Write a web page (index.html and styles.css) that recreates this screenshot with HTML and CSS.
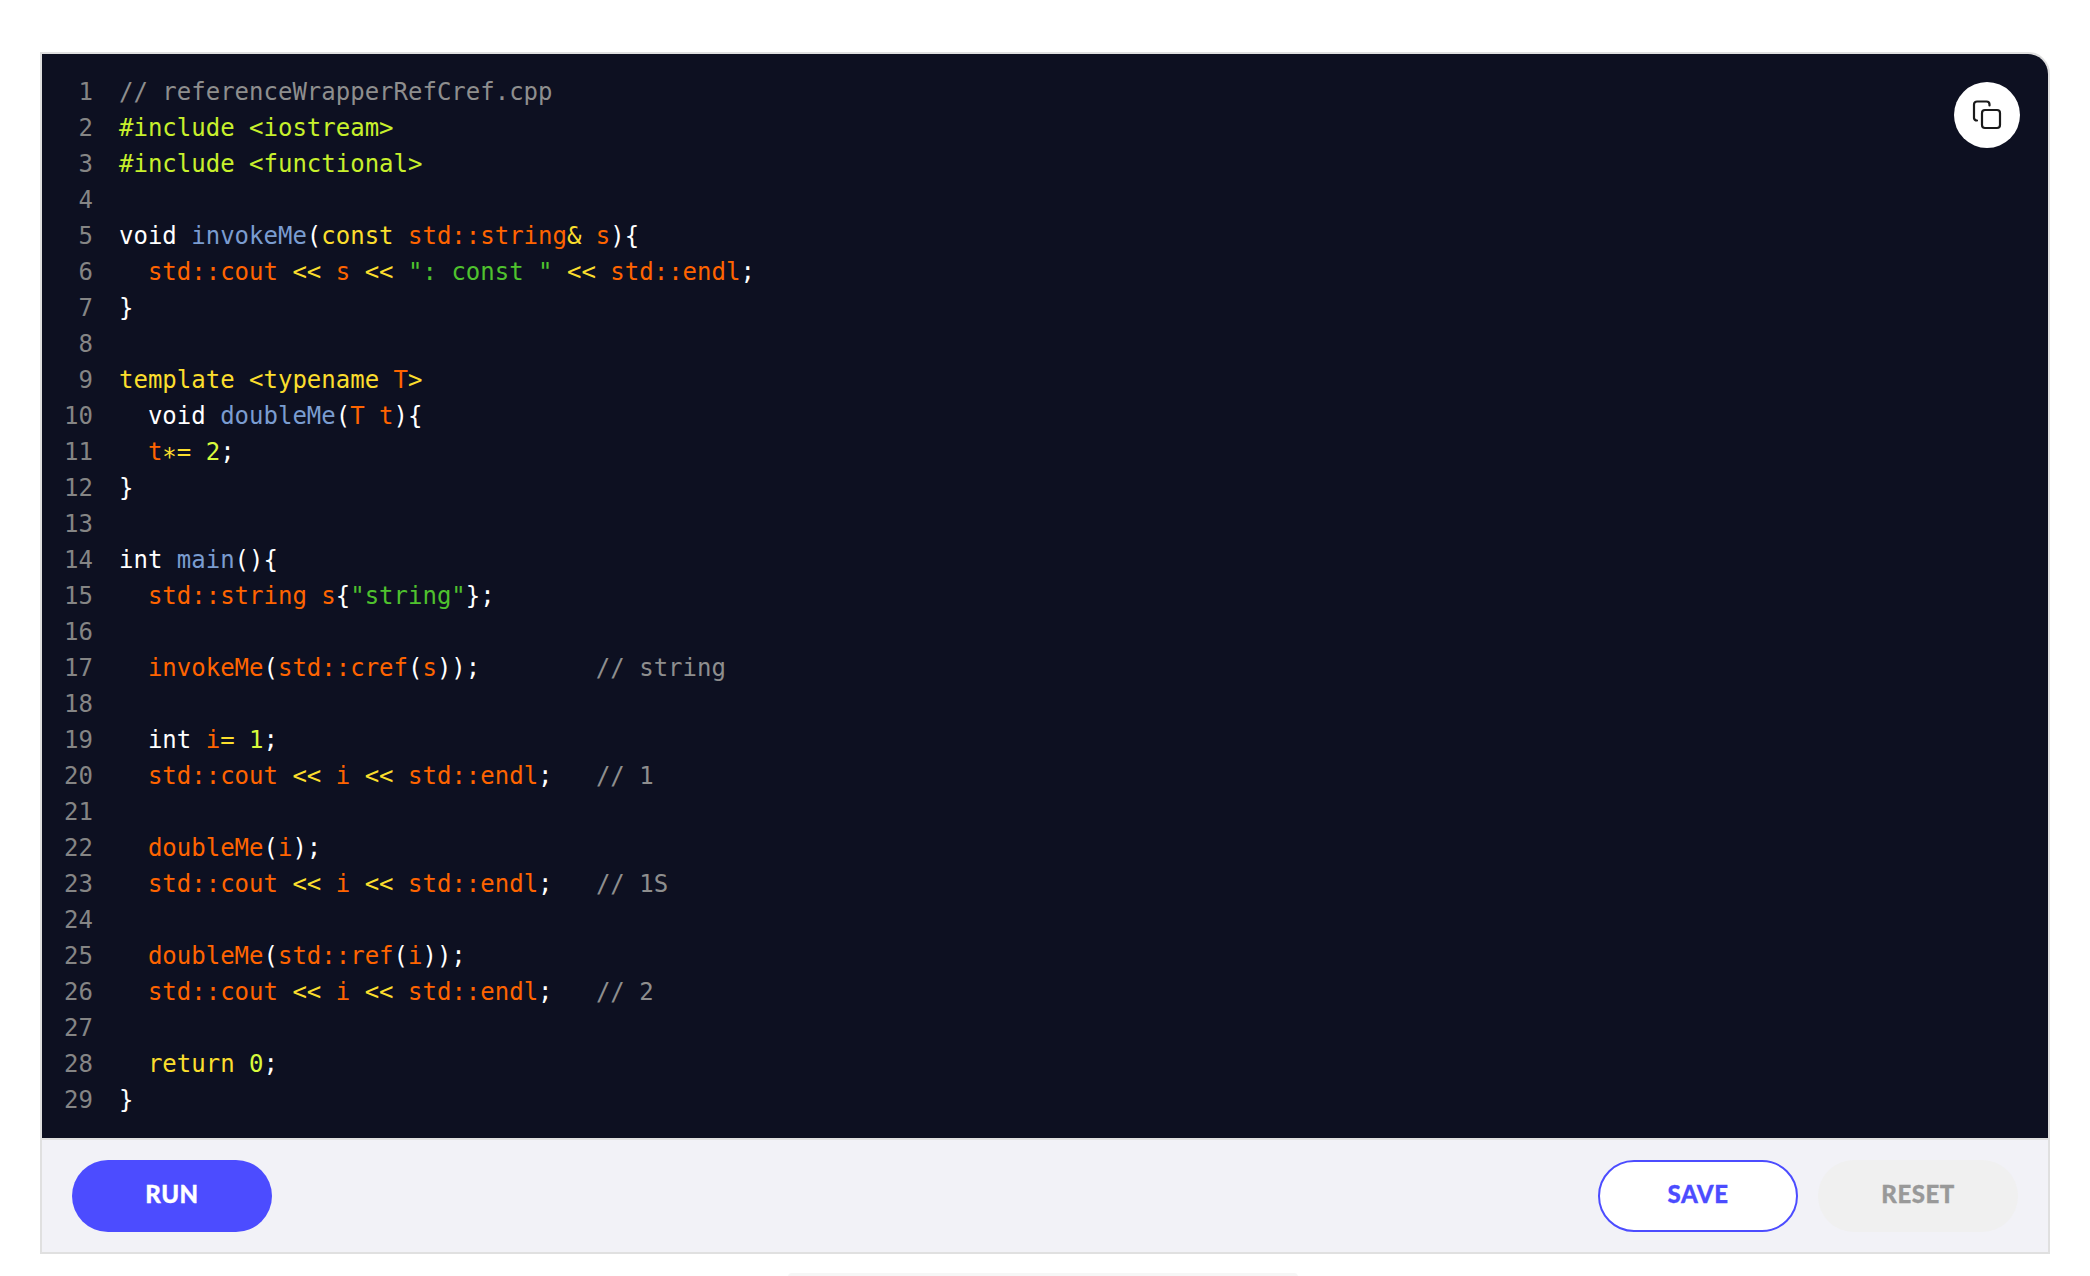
FILE: index.html
```html
<!DOCTYPE html>
<html lang="en">
<head>
<meta charset="utf-8">
<title>referenceWrapperRefCref.cpp</title>
<link rel="stylesheet" href="styles.css">
</head>
<body>
<main class="widget">
  <div class="editor">
    <button class="copy" aria-label="Copy">
      <svg class="copy-icon" viewBox="0 0 30 30" width="30" height="30" fill="none" stroke="currentColor" stroke-width="2.2" stroke-linejoin="round" stroke-linecap="round">
        <rect x="10" y="10" width="18" height="18" rx="3"/>
        <path d="M5 20.500A3 3 0 0 1 2 18V4.500A3 3 0 0 1 5 1.500H14.500A3 3 0 0 1 17.500 4.500V5.500"/>
      </svg>
    </button>
    <div class="line"><span class="num">1</span><code class="code"><span class="c">// referenceWrapperRefCref.cpp</span></code></div>
    <div class="line"><span class="num">2</span><code class="code"><span class="p">#include &lt;iostream&gt;</span></code></div>
    <div class="line"><span class="num">3</span><code class="code"><span class="p">#include &lt;functional&gt;</span></code></div>
    <div class="line"><span class="num">4</span><code class="code"></code></div>
    <div class="line"><span class="num">5</span><code class="code">void <span class="f">invokeMe</span>(<span class="k">const</span> <span class="v">std::string</span><span class="k">&amp;</span> <span class="v">s</span>){</code></div>
    <div class="line"><span class="num">6</span><code class="code">  <span class="v">std::cout</span> <span class="k">&lt;&lt;</span> <span class="v">s</span> <span class="k">&lt;&lt;</span> <span class="s">": const "</span> <span class="k">&lt;&lt;</span> <span class="v">std::endl</span>;</code></div>
    <div class="line"><span class="num">7</span><code class="code">}</code></div>
    <div class="line"><span class="num">8</span><code class="code"></code></div>
    <div class="line"><span class="num">9</span><code class="code"><span class="k">template &lt;typename</span> <span class="v">T</span><span class="k">&gt;</span></code></div>
    <div class="line"><span class="num">10</span><code class="code">  void <span class="f">doubleMe</span>(<span class="v">T t</span>){</code></div>
    <div class="line"><span class="num">11</span><code class="code">  <span class="v">t</span><span class="k"><span class="star">*</span>=</span> <span class="n">2</span>;</code></div>
    <div class="line"><span class="num">12</span><code class="code">}</code></div>
    <div class="line"><span class="num">13</span><code class="code"></code></div>
    <div class="line"><span class="num">14</span><code class="code">int <span class="f">main</span>(){</code></div>
    <div class="line"><span class="num">15</span><code class="code">  <span class="v">std::string s</span>{<span class="s">"string"</span>};</code></div>
    <div class="line"><span class="num">16</span><code class="code"></code></div>
    <div class="line"><span class="num">17</span><code class="code">  <span class="v">invokeMe</span>(<span class="v">std::cref</span>(<span class="v">s</span>));        <span class="c">// string</span></code></div>
    <div class="line"><span class="num">18</span><code class="code"></code></div>
    <div class="line"><span class="num">19</span><code class="code">  int <span class="v">i</span><span class="k">=</span> <span class="n">1</span>;</code></div>
    <div class="line"><span class="num">20</span><code class="code">  <span class="v">std::cout</span> <span class="k">&lt;&lt;</span> <span class="v">i</span> <span class="k">&lt;&lt;</span> <span class="v">std::endl</span>;   <span class="c">// 1</span></code></div>
    <div class="line"><span class="num">21</span><code class="code"></code></div>
    <div class="line"><span class="num">22</span><code class="code">  <span class="v">doubleMe</span>(<span class="v">i</span>);</code></div>
    <div class="line"><span class="num">23</span><code class="code">  <span class="v">std::cout</span> <span class="k">&lt;&lt;</span> <span class="v">i</span> <span class="k">&lt;&lt;</span> <span class="v">std::endl</span>;   <span class="c">// 1S</span></code></div>
    <div class="line"><span class="num">24</span><code class="code"></code></div>
    <div class="line"><span class="num">25</span><code class="code">  <span class="v">doubleMe</span>(<span class="v">std::ref</span>(<span class="v">i</span>));</code></div>
    <div class="line"><span class="num">26</span><code class="code">  <span class="v">std::cout</span> <span class="k">&lt;&lt;</span> <span class="v">i</span> <span class="k">&lt;&lt;</span> <span class="v">std::endl</span>;   <span class="c">// 2</span></code></div>
    <div class="line"><span class="num">27</span><code class="code"></code></div>
    <div class="line"><span class="num">28</span><code class="code">  <span class="k">return</span> <span class="n">0</span>;</code></div>
    <div class="line"><span class="num">29</span><code class="code">}</code></div>
  </div>
  <footer class="actions">
    <button class="btn btn-run">RUN</button>
    <div class="actions-right">
      <button class="btn btn-save">SAVE</button>
      <button class="btn btn-reset">RESET</button>
    </div>
  </footer>
</main>
<div class="next-card"></div>
</body>
</html>
```
FILE: styles.css
```css
* { box-sizing: border-box; }
html, body { margin: 0; height: 100%; background: #fff; overflow: hidden; }
body { padding: 52px 40px 0; }
.widget {
  width: 2010px;
  border: 2px solid #e0e0e0;
  border-top-right-radius: 22px;
  overflow: hidden;
}
.editor {
  position: relative;
  background: #0d1021;
  padding: 20px 0;
  font-family: "DejaVu Sans Mono", monospace;
  font-size: 24px;
  line-height: 36px;
  color: #fff;
}
.line { display: flex; height: 36px; }
.num { width: 51px; text-align: right; color: #858585; flex: none; }
.code {
  font: inherit;
  white-space: pre;
  margin-left: 26px;
}
.c { color: #8e8e8e; }
.p { color: #c8f02c; }
.f { color: #7a9cd0; }
.k { color: #fbde2d; }
.star { vertical-align: -5px; }
.v { color: #ff6400; }
.s { color: #4fc22e; }
.n { color: #d8fa3c; }
.copy {
  position: absolute;
  top: 28px;
  right: 28px;
  width: 66px;
  height: 66px;
  padding: 0;
  border: 0;
  border-radius: 50%;
  background: #fff;
  color: #1a1a1a;
  display: flex;
  align-items: center;
  justify-content: center;
}
.actions {
  display: flex;
  justify-content: space-between;
  padding: 20px 30px;
  background: #f2f2f7;
  border-top: 2px solid #e0e0e0;
}
.actions-right { display: flex; gap: 20px; }
.btn {
  width: 200px;
  height: 72px;
  border-radius: 36px;
  padding: 0 0 6px;
  font-family: Lato, "Noto Sans", sans-serif;
  font-weight: 900;
  font-size: 24px;
  letter-spacing: 0.5px;
  -webkit-text-stroke: 0.3px currentColor;
  border: 0;
}
.btn-run { background: #4c4cff; color: #fff; }
.btn-save { background: #fff; color: #4c4cff; border: 2px solid #4c4cff; }
.btn-reset { background: #f0f0f0; color: #999; }
.next-card {
  width: 510px;
  height: 4px;
  margin: 19px 0 0 748px;
  background: #f6f6f6;
  border-radius: 4px 4px 0 0;
}
```
